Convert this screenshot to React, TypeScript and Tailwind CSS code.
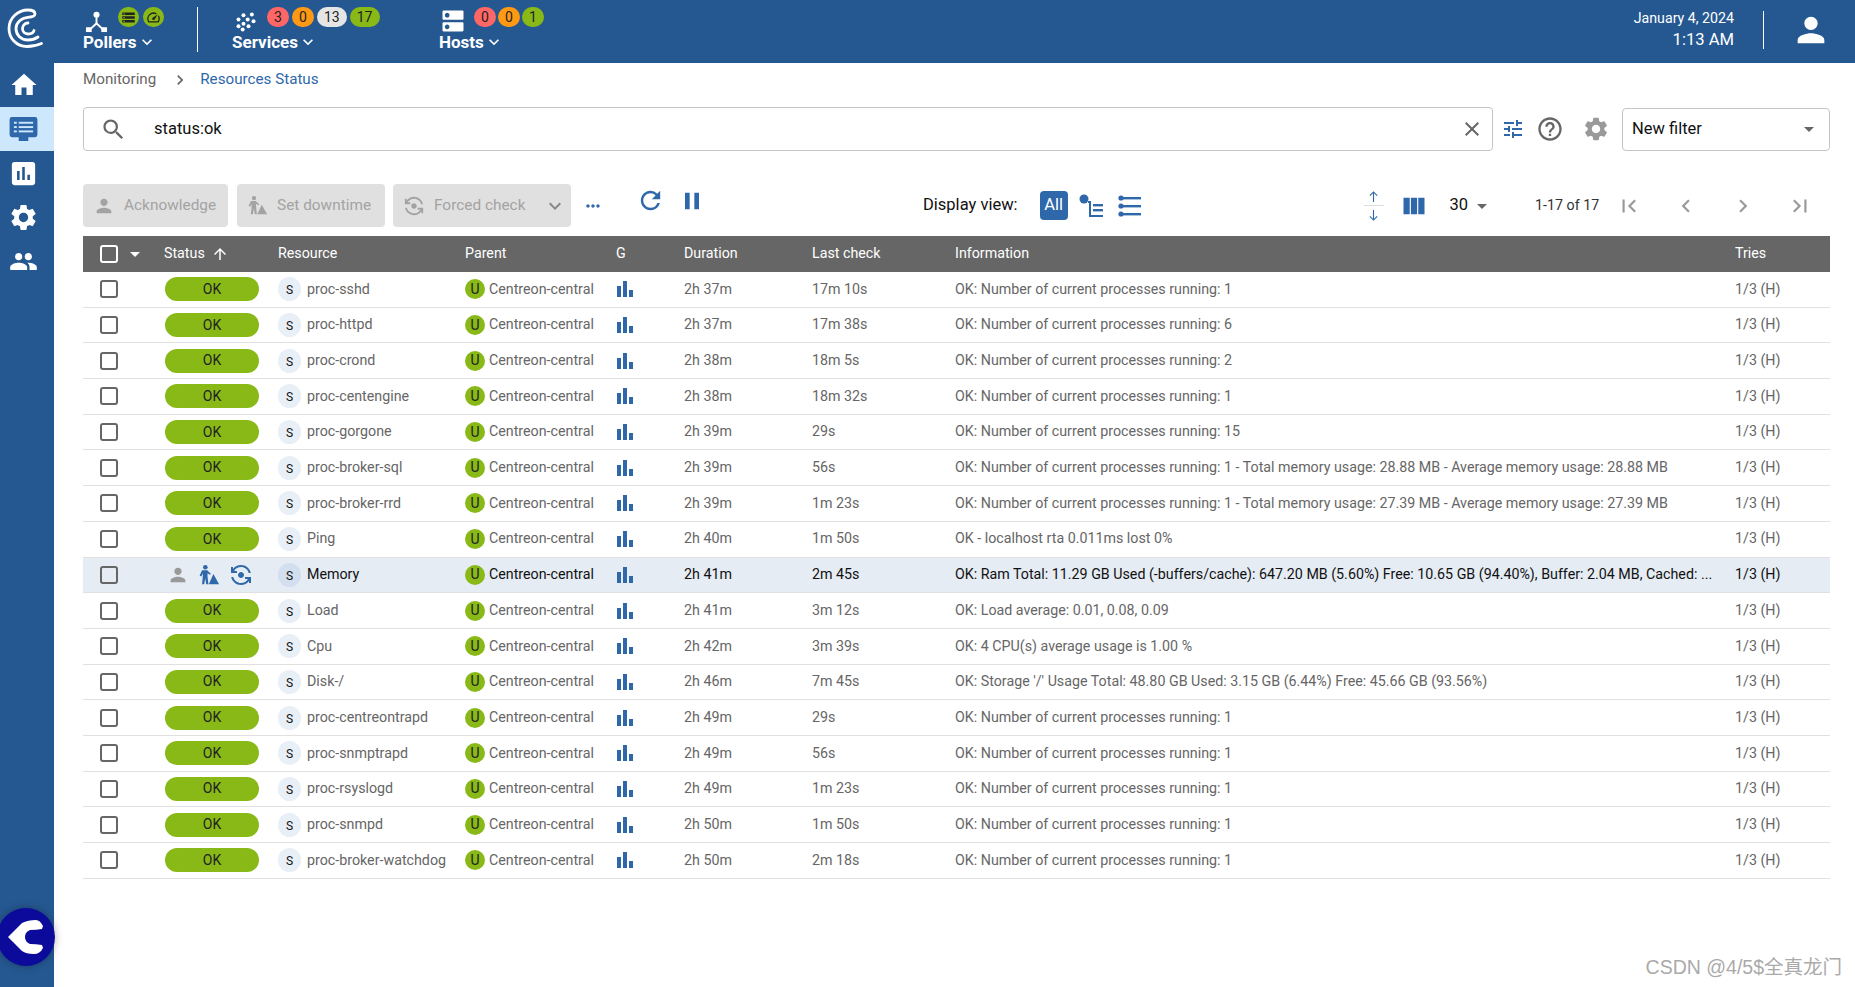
import {
  MdArrowDropDown,
  MdArrowUpward,
  MdAssessment,
  MdBarChart,
  MdChevronLeft,
  MdChevronRight,
  MdClose,
  MdDns,
  MdFirstPage,
  MdFlipCameraAndroid,
  MdHelpOutline,
  MdHome,
  MdKeyboardArrowDown,
  MdLastPage,
  MdMoreHoriz,
  MdPause,
  MdPeople,
  MdPerson,
  MdRefresh,
  MdSearch,
  MdSettings,
  MdSpeed,
  MdStorage,
  MdTune,
  MdViewColumn,
} from "react-icons/md";

interface Row {
  resource: string;
  duration: string;
  lastCheck: string;
  info: string;
  hovered?: boolean;
}

const procs = (n: number) => `OK: Number of current processes running: ${n}`;

const rows: Row[] = [
  { resource: "proc-sshd", duration: "2h 37m", lastCheck: "17m 10s", info: procs(1) },
  { resource: "proc-httpd", duration: "2h 37m", lastCheck: "17m 38s", info: procs(6) },
  { resource: "proc-crond", duration: "2h 38m", lastCheck: "18m 5s", info: procs(2) },
  { resource: "proc-centengine", duration: "2h 38m", lastCheck: "18m 32s", info: procs(1) },
  { resource: "proc-gorgone", duration: "2h 39m", lastCheck: "29s", info: procs(15) },
  {
    resource: "proc-broker-sql",
    duration: "2h 39m",
    lastCheck: "56s",
    info: `${procs(1)} - Total memory usage: 28.88 MB - Average memory usage: 28.88 MB`,
  },
  {
    resource: "proc-broker-rrd",
    duration: "2h 39m",
    lastCheck: "1m 23s",
    info: `${procs(1)} - Total memory usage: 27.39 MB - Average memory usage: 27.39 MB`,
  },
  { resource: "Ping", duration: "2h 40m", lastCheck: "1m 50s", info: "OK - localhost rta 0.011ms lost 0%" },
  {
    resource: "Memory",
    duration: "2h 41m",
    lastCheck: "2m 45s",
    info: "OK: Ram Total: 11.29 GB Used (-buffers/cache): 647.20 MB (5.60%) Free: 10.65 GB (94.40%), Buffer: 2.04 MB, Cached: ...",
    hovered: true,
  },
  { resource: "Load", duration: "2h 41m", lastCheck: "3m 12s", info: "OK: Load average: 0.01, 0.08, 0.09" },
  { resource: "Cpu", duration: "2h 42m", lastCheck: "3m 39s", info: "OK: 4 CPU(s) average usage is 1.00 %" },
  {
    resource: "Disk-/",
    duration: "2h 46m",
    lastCheck: "7m 45s",
    info: "OK: Storage '/' Usage Total: 48.80 GB Used: 3.15 GB (6.44%) Free: 45.66 GB (93.56%)",
  },
  { resource: "proc-centreontrapd", duration: "2h 49m", lastCheck: "29s", info: procs(1) },
  { resource: "proc-snmptrapd", duration: "2h 49m", lastCheck: "56s", info: procs(1) },
  { resource: "proc-rsyslogd", duration: "2h 49m", lastCheck: "1m 23s", info: procs(1) },
  { resource: "proc-snmpd", duration: "2h 50m", lastCheck: "1m 50s", info: procs(1) },
  { resource: "proc-broker-watchdog", duration: "2h 50m", lastCheck: "2m 18s", info: procs(1) },
];

function Badge({ color, children }: { color: string; children: React.ReactNode }) {
  return (
    <span className={`flex h-[20px] min-w-[22px] items-center justify-center rounded-full px-[7px] text-[14px] text-[#222] ${color}`}>
      {children}
    </span>
  );
}

function IconBadge({ children }: { children: React.ReactNode }) {
  return (
    <span className="flex h-[20px] w-[21px] items-center justify-center rounded-full bg-[#88b917] text-[#222]">
      {children}
    </span>
  );
}

function NavLabel({ children }: { children: React.ReactNode }) {
  return (
    <div className="flex items-center pt-[1px] text-[17px] font-bold leading-[22px]">
      {children}
      <MdKeyboardArrowDown className="h-[20px] w-[20px]" />
    </div>
  );
}

function CentreonLogo() {
  return (
    <svg viewBox="0 0 37 40" className="h-[40px] w-[37px]" fill="none" stroke="white" strokeWidth="2.8" strokeLinecap="round">
      <path d="M34.5 35.5 C29 38 25 38.5 20 38.5 C9 38.5 2 30 2 20.5 C2 10 11 2 21 2 C25 2 28 3.5 28 6 C28 8.5 25 9 21 9.3 C14 10 9 15 9 20.5 C9 27 14 32 21 32 C25 32 28 31 31 29" />
      <path d="M21 15 C17.5 15 15.5 18 15.5 20.5 C15.5 24 18 26 21 26 C24 26 26.5 24.5 27 22.5" />
    </svg>
  );
}

function PollerIcon() {
  return (
    <svg viewBox="0 0 24 24" className="mt-[3px] h-[23px] w-[23px] shrink-0" fill="white">
      <circle cx="12" cy="5" r="3.2" />
      <rect x="11" y="7" width="2" height="7" />
      <path d="M12 12.5 L20 20 L18.6 21.4 L12 15.3 L5.4 21.4 L4 20 Z" />
      <rect x="1" y="18" width="6" height="5" />
      <rect x="17" y="18" width="6" height="5" />
    </svg>
  );
}

function ServicesIcon() {
  const dots = [
    [19, 3],
    [9, 4],
    [3, 9],
    [14, 9],
    [21, 11],
    [9, 14],
    [3, 17],
    [15, 17],
    [8, 21],
  ];
  return (
    <svg viewBox="0 0 24 24" className="ml-[4px] mt-[5px] h-[20px] w-[20px] shrink-0" fill="white">
      {dots.map(([x, y]) => (
        <circle key={`${x}-${y}`} cx={x} cy={y} r="2.4" />
      ))}
    </svg>
  );
}

function DowntimeIcon({ className }: { className: string }) {
  return (
    <svg viewBox="0 0 24 24" className={className} fill="currentColor">
      <circle cx="8" cy="3.5" r="2.5" />
      <path d="M4.5 6.8 H10 L14 10.5 L13 11.8 L10.4 10 V14 L11.4 22 H9 L7.8 15.5 L6.8 22 H4.4 L5.2 14 V10 L3.6 13.5 L1.8 12.6 Z" />
      <path d="M16.8 11 L23 22 H11.8 Z" />
    </svg>
  );
}

function TreeViewIcon() {
  return (
    <svg viewBox="0 0 26 26" className="h-[26px] w-[26px] text-[#2e68aa]" fill="currentColor">
      <circle cx="5" cy="6" r="4.5" />
      <path d="M9 8 H12 V22 H24 V24 H10 V10 H9 Z" />
      <rect x="14" y="11" width="10" height="2.4" />
      <rect x="14" y="16" width="10" height="2.4" />
    </svg>
  );
}

function ListViewIcon() {
  return (
    <svg viewBox="0 0 26 26" className="h-[26px] w-[26px] text-[#2e68aa]" fill="currentColor">
      <circle cx="4" cy="5" r="2.6" />
      <rect x="3" y="4" width="21" height="2.4" />
      <circle cx="4" cy="13" r="2.6" />
      <rect x="3" y="12" width="21" height="2.4" />
      <circle cx="4" cy="21" r="2.6" />
      <rect x="3" y="20" width="21" height="2.4" />
    </svg>
  );
}

function MonitorIcon() {
  return (
    <svg viewBox="0 0 30 25" className="h-[24px] w-[29px]" fill="#2e68aa">
      <path d="M3 0 H27 A2.5 2.5 0 0 1 29.5 2.5 V18.5 A2.5 2.5 0 0 1 27 21 H20 V25 H10 V21 H3 A2.5 2.5 0 0 1 .5 18.5 V2.5 A2.5 2.5 0 0 1 3 0 Z" />
      <g fill="#cde7fc">
        <rect x="5" y="5" width="3" height="2" />
        <rect x="10" y="5" width="15" height="2" />
        <rect x="5" y="9.5" width="3" height="2" />
        <rect x="10" y="9.5" width="15" height="2" />
        <rect x="5" y="14" width="3" height="2" />
        <rect x="10" y="14" width="15" height="2" />
      </g>
    </svg>
  );
}

function ExpandIcon() {
  return (
    <div className="flex h-[30px] w-[20px] flex-col items-center justify-between text-[#2e68aa]">
      <svg viewBox="0 0 12 12" className="h-[11px] w-[11px]" fill="none" stroke="currentColor" strokeWidth="1.2">
        <path d="M6 12 V1 M2 5 L6 1 L10 5" />
      </svg>
      <div className="h-px w-full bg-[#ddd]" />
      <svg viewBox="0 0 12 12" className="h-[11px] w-[11px]" fill="none" stroke="currentColor" strokeWidth="1.2">
        <path d="M6 0 V11 M2 7 L6 11 L10 7" />
      </svg>
    </div>
  );
}

function ActionButton({ children, className }: { children: React.ReactNode; className: string }) {
  return (
    <div className={`flex h-[43px] items-center rounded-[4px] bg-[#e0e0e0] text-[15.4px] text-[#a3a3a3] ${className}`}>
      {children}
    </div>
  );
}

function Checkbox({ white }: { white?: boolean }) {
  return <div className={`h-[18px] w-[18px] shrink-0 rounded-[3px] border-2 ${white ? "border-white" : "border-[#666]"}`} />;
}

function SideItem({ children, active }: { children: React.ReactNode; active?: boolean }) {
  return (
    <div className={`flex h-[44px] w-full items-center justify-center pr-[7px] ${active ? "bg-[#cde7fc]" : ""}`}>
      {children}
    </div>
  );
}

const gridCols = "grid grid-cols-[82px_113px_187px_151px_68px_128px_143px_780px_95px] items-center";

function TableRow({ row }: { row: Row }) {
  const nameColor = row.hovered ? "text-[#111]" : "text-[#666]";
  return (
    <div className={`${gridCols} h-[35.7px] border-b border-[#e0e0e0] text-[14.25px] ${row.hovered ? "bg-[#e5ecf4]" : ""} ${nameColor}`}>
      <div className="pl-[17px]">
        <Checkbox />
      </div>
      {row.hovered ? (
        <div className="flex items-center gap-[9px] pl-[2px]">
          <MdPerson className="h-[22px] w-[22px] text-[#999]" />
          <DowntimeIcon className="h-[22px] w-[22px] text-[#2e68aa]" />
          <MdFlipCameraAndroid className="h-[24px] w-[24px] text-[#2e68aa]" />
        </div>
      ) : (
        <div className="flex h-[24px] w-[94px] items-center justify-center rounded-full bg-[#88b917] text-[14px] text-[#222]">
          OK
        </div>
      )}
      <div className="flex items-center gap-[6px]">
        <span className={`flex h-[24px] w-[23px] items-center justify-center rounded-full pt-[2px] text-[12px] text-[#111] ${row.hovered ? "bg-[#d3dfee]" : "bg-[#e9eff6]"}`}>
          S
        </span>
        <span className="whitespace-nowrap">{row.resource}</span>
      </div>
      <div className="flex items-center gap-[4px]">
        <span className="flex h-[20px] w-[20px] items-center justify-center rounded-full bg-[#88b917] text-[14px] text-[#222]">
          U
        </span>
        <span className="whitespace-nowrap">Centreon-central</span>
      </div>
      <div>
        <MdBarChart className="-ml-[3px] h-[24px] w-[24px] text-[#2e68aa]" />
      </div>
      <div>{row.duration}</div>
      <div>{row.lastCheck}</div>
      <div className="whitespace-nowrap">{row.info}</div>
      <div>1/3 (H)</div>
    </div>
  );
}

export default function App() {
  return (
    <div className="relative flex h-[987px] w-[1855px] flex-col overflow-hidden bg-white font-['Roboto',sans-serif]">
      {/* Top bar */}
      <header className="flex h-[63px] shrink-0 items-start bg-[#255891] pt-[7px] text-white">
        <div className="w-[83px] pl-[7px] pt-[1px]">
          <CentreonLogo />
        </div>
        <div className="w-[114px]">
          <div className="flex h-[23px] items-start gap-[10px] pl-[2px]">
            <PollerIcon />
            <div className="flex gap-[4px]">
              <IconBadge>
                <MdStorage className="h-[15px] w-[15px]" />
              </IconBadge>
              <IconBadge>
                <MdSpeed className="h-[15px] w-[15px]" />
              </IconBadge>
            </div>
          </div>
          <NavLabel>Pollers</NavLabel>
        </div>
        <div className="h-[45px] w-px bg-white" />
        <div className="w-[241px] pl-[34px]">
          <div className="flex h-[23px] items-start gap-[11px]">
            <ServicesIcon />
            <div className="flex gap-[3px]">
              <Badge color="bg-[#ff6666]">3</Badge>
              <Badge color="bg-[#ff9913]">0</Badge>
              <Badge color="bg-[#e5e5e5]">13</Badge>
              <Badge color="bg-[#88b917]">17</Badge>
            </div>
          </div>
          <NavLabel>Services</NavLabel>
        </div>
        <div>
          <div className="flex h-[23px] items-start gap-[7px]">
            <MdDns className="h-[28px] w-[28px] shrink-0" />
            <div className="flex gap-[2px]">
              <Badge color="bg-[#ff6666]">0</Badge>
              <Badge color="bg-[#ff9913]">0</Badge>
              <Badge color="bg-[#88b917]">1</Badge>
            </div>
          </div>
          <NavLabel>Hosts</NavLabel>
        </div>
        <div className="ml-auto flex items-center pt-[1px]">
          <div className="text-right">
            <div className="text-[14.2px] leading-[20px]">January 4, 2024</div>
            <div className="text-[16.6px] leading-[24px]">1:13 AM</div>
          </div>
          <div className="ml-[29px] h-[38px] w-px bg-white" />
          <div className="flex w-[91px] justify-center pl-[2px]">
            <MdPerson className="h-[40px] w-[40px]" />
          </div>
        </div>
      </header>

      <div className="flex min-h-0 flex-1">
        {/* Side menu */}
        <nav className="flex w-[54px] shrink-0 flex-col bg-[#255891] text-white">
          <SideItem>
            <MdHome className="h-[30px] w-[30px]" />
          </SideItem>
          <SideItem active>
            <MonitorIcon />
          </SideItem>
          <SideItem>
            <MdAssessment className="h-[31px] w-[31px]" />
          </SideItem>
          <SideItem>
            <MdSettings className="h-[31px] w-[31px]" />
          </SideItem>
          <SideItem>
            <MdPeople className="h-[29px] w-[29px]" />
          </SideItem>
        </nav>

        <main className="min-w-0 flex-1 pl-[29px] pr-[25px]">
          {/* Breadcrumb */}
          <div className="flex h-[30px] items-center pt-[3px] text-[15.2px]">
            <span className="text-[#666]">Monitoring</span>
            <MdChevronRight className="ml-[14px] mr-[10px] h-[20px] w-[20px] text-[#666]" />
            <span className="text-[#2e68aa]">Resources Status</span>
          </div>

          {/* Search filter */}
          <div className="mt-[14px] flex h-[44px] items-center">
            <div className="flex h-[44px] w-[1410px] items-center rounded-[4px] border border-[#c4c4c4] pl-[16px] pr-[8px]">
              <MdSearch className="h-[27px] w-[27px] text-[#666]" />
              <span className="ml-[27px] text-[16.5px] text-[#111]">status:ok</span>
              <MdClose className="ml-auto h-[24px] w-[24px] text-[#666]" />
            </div>
            <MdTune className="ml-[8px] h-[24px] w-[24px] text-[#2e68aa]" />
            <MdHelpOutline className="ml-[11px] h-[28px] w-[28px] text-[#666]" />
            <MdSettings className="ml-[18px] h-[28px] w-[28px] text-[#999]" />
            <div className="ml-[12px] flex h-[43px] w-[208px] items-center justify-between rounded-[4px] border border-[#c4c4c4] pl-[9px] pr-[8px] text-[16.5px] text-[#111]">
              New filter
              <MdArrowDropDown className="h-[24px] w-[24px] text-[#666]" />
            </div>
          </div>

          {/* Action bar */}
          <div className="mt-[33px] flex h-[43px] items-center">
            <ActionButton className="w-[145px] gap-[9px] pl-[10px]">
              <MdPerson className="h-[22px] w-[22px] text-[#a3a3a3]" />
              Acknowledge
            </ActionButton>
            <ActionButton className="ml-[9px] w-[148px] gap-[9px] pl-[10px]">
              <DowntimeIcon className="h-[21px] w-[21px] text-[#a3a3a3]" />
              Set downtime
            </ActionButton>
            <ActionButton className="ml-[8px] w-[178px] pl-[10px]">
              <MdFlipCameraAndroid className="h-[22px] w-[22px] text-[#a3a3a3]" />
              <span className="ml-[9px]">Forced check</span>
              <MdKeyboardArrowDown className="ml-auto mr-[4px] h-[24px] w-[24px] text-[#888]" />
            </ActionButton>
            <MdMoreHoriz className="ml-[12px] h-[20px] w-[20px] text-[#2e68aa]" />
            <MdRefresh className="mb-[10px] ml-[33px] h-[29px] w-[29px] text-[#2e68aa]" />
            <MdPause className="mb-[10px] ml-[13px] h-[28px] w-[28px] text-[#2e68aa]" />
            <span className="ml-[217px] text-[16.5px] text-[#111]">Display view:</span>
            <span className="ml-[22px] flex h-[29px] w-[28px] items-center justify-center rounded-[4px] bg-[#2e68aa] text-[16.5px] text-white">
              All
            </span>
            <span className="ml-[11px]">
              <TreeViewIcon />
            </span>
            <span className="ml-[12px]">
              <ListViewIcon />
            </span>
            <span className="ml-[221px]">
              <ExpandIcon />
            </span>
            <MdViewColumn className="ml-[16px] h-[28px] w-[28px] text-[#2e68aa]" />
            <span className="ml-[22px] text-[16.5px] text-[#111]">30</span>
            <MdArrowDropDown className="ml-[2px] h-[24px] w-[24px] text-[#666]" />
            <span className="ml-[41px] text-[14.25px] text-[#333]">1-17 of 17</span>
            <MdFirstPage className="ml-[17px] h-[26px] w-[26px] text-[#999]" />
            <MdChevronLeft className="ml-[31px] h-[26px] w-[26px] text-[#999]" />
            <MdChevronRight className="ml-[31px] h-[26px] w-[26px] text-[#999]" />
            <MdLastPage className="ml-[31px] h-[26px] w-[26px] text-[#999]" />
          </div>

          {/* Resource table */}
          <div className="mt-[9px] w-[1747px]">
            <div className={`${gridCols} h-[36px] bg-[#666666] text-[14.25px] text-white`}>
              <div className="flex items-center pl-[17px]">
                <Checkbox white />
                <MdArrowDropDown className="ml-[5px] h-[24px] w-[24px]" />
              </div>
              <div className="-ml-[1px] flex items-center">
                Status
                <MdArrowUpward className="ml-[6px] h-[18px] w-[18px]" />
              </div>
              <div>Resource</div>
              <div>Parent</div>
              <div>G</div>
              <div>Duration</div>
              <div>Last check</div>
              <div>Information</div>
              <div>Tries</div>
            </div>
            {rows.map((row) => (
              <TableRow key={row.resource} row={row} />
            ))}
          </div>
        </main>
      </div>

      {/* Floating support button */}
      <div className="absolute left-[-3px] top-[908px] flex h-[58px] w-[58px] items-center justify-center rounded-full bg-[#0c0a9b] shadow-[0_0_8px_rgba(0,0,0,0.3)]">
        <svg viewBox="0 0 36 34" className="h-[34px] w-[36px]" fill="white">
          <path d="M0 17 L14 3 Q20 0 28 0 Q32 0 35 6 L34 9 Q28 10 22 10 Q17 12 17 17 Q17 22 22 24 Q28 24 34 25 L35 28 Q32 34 26 34 Q18 34 14 31 Z" />
        </svg>
      </div>

      {/* Watermark */}
      <div className="absolute bottom-[5px] right-[13px] font-['Liberation_Sans','Noto_Sans_CJK_SC',sans-serif] text-[19.5px] text-[#aaa]">
        CSDN @4/5$全真龙门
      </div>
    </div>
  );
}
